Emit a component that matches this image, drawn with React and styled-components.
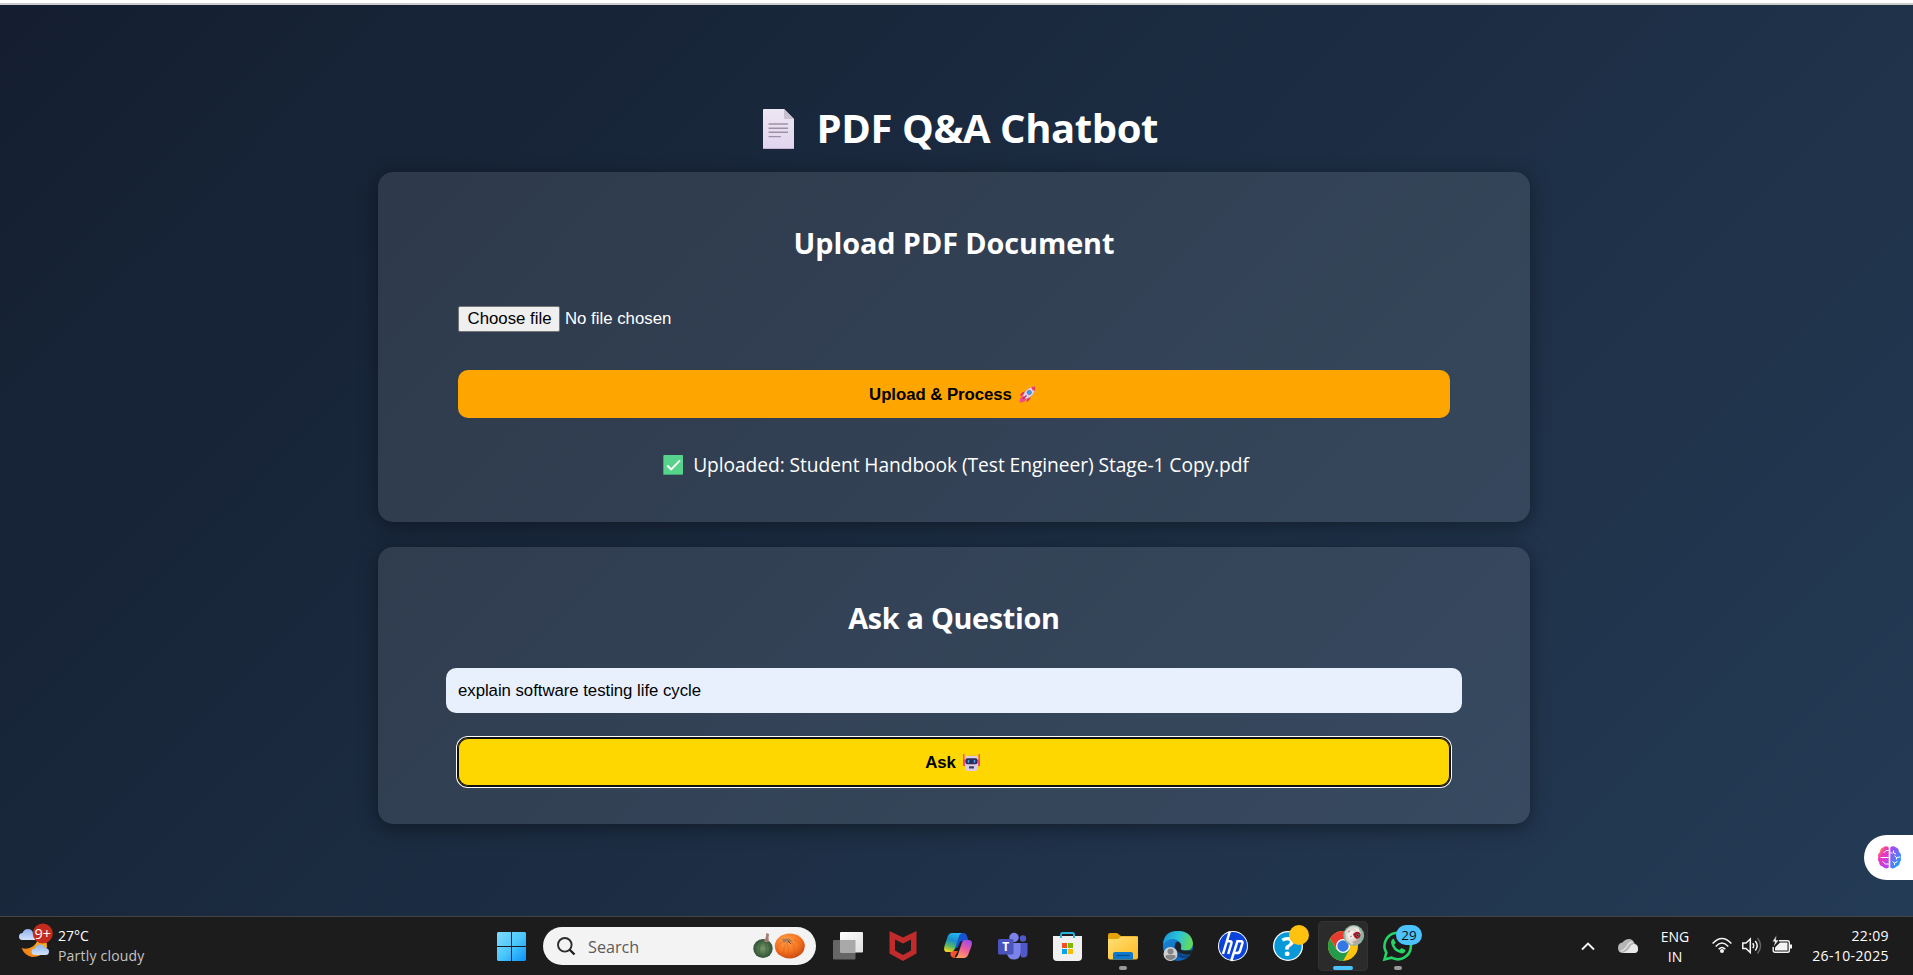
import React from 'react';
import styled, { createGlobalStyle } from 'styled-components';

const ui = '"Segoe UI", "Open Sans", "Noto Sans", sans-serif';
const form = 'Arial, "Liberation Sans", sans-serif';

const GlobalStyle = createGlobalStyle`
  *, *::before, *::after { box-sizing: border-box; }
  body { margin: 0; background: #141e30; overflow: hidden; }
  svg { display: block; flex: none; overflow: visible; }
`;

/* ---------- page ---------- */

const Screen = styled.div`
  position: relative;
  display: flex;
  flex-direction: column;
  width: 1913px;
  height: 975px;
  font-family: ${ui};
`;

const TopEdge = styled.div`
  height: 5px;
  background: #fff;
  border-bottom: 2px solid #cbcccb;
`;

const Page = styled.main`
  flex: 1;
  display: flex;
  flex-direction: column;
  align-items: center;
  padding: 96px 5px 0 0;
  color: #fff;
  background: linear-gradient(135deg, #141e30, #243b55);
`;

const Title = styled.h1`
  display: flex;
  align-items: center;
  gap: 22.5px;
  margin: 0 0 17px;
  padding-left: 13px;
  font-size: 40px;
  line-height: 54px;
  letter-spacing: -0.42px;
`;

const Card = styled.section`
  display: flex;
  flex-direction: column;
  width: 1152px;
  height: ${(p) => p.$height}px;
  margin-bottom: 25px;
  padding: 52px 80px 0;
  border-radius: 15px;
  background: rgba(255, 255, 255, 0.1);
  box-shadow: 0 4px 20px rgba(0, 0, 0, 0.4);
`;

const CardTitle = styled.h2`
  margin: 0 0 ${(p) => p.$gap}px;
  font-size: 28.8px;
  line-height: 38px;
  text-align: center;
  letter-spacing: ${(p) => p.$track}px;
`;

const FileRow = styled.div`
  display: flex;
  align-items: center;
  gap: 5px;
  height: 26px;
  margin-bottom: 38px;
  font: 16.8px ${form};
`;

const FileButton = styled.button`
  width: 102px;
  height: 26px;
  padding: 0 0 0 1px;
  border: 1px solid #767676;
  border-radius: 2px;
  background: #efefef;
  color: #000;
  font: inherit;
  line-height: 22px;
  white-space: nowrap;
`;

const ActionButton = styled.button`
  display: flex;
  align-items: center;
  justify-content: center;
  gap: 7px;
  height: 48px;
  padding: 2px 3px 0 0;
  border: 0;
  border-radius: 10px;
  background: ${(p) => p.$color};
  color: #000;
  font: bold 16.8px ${form};
  letter-spacing: -0.05px;
  box-shadow: ${(p) =>
    p.$focused ? 'inset 0 0 0 1px #101010, 0 0 0 1px #101010, 0 0 0 2px #fff' : 'none'};

  svg {
    margin-top: -2px;
  }
`;

const Status = styled.p`
  display: flex;
  align-items: center;
  justify-content: center;
  gap: 10px;
  margin: 34px 0 0;
  padding-left: 4px;
  font-size: 19.2px;
  line-height: 26px;
  letter-spacing: -0.06px;
`;

const Question = styled.input`
  width: 1016px;
  height: 45px;
  margin: 0 -12px 25px;
  padding: 0 12px;
  border: 0;
  border-radius: 10px;
  outline: 0;
  background: #e8f0fe;
  color: #000;
  font: 16.8px ${form};
  letter-spacing: -0.04px;
`;

const Assistant = styled.aside`
  position: absolute;
  right: 0;
  top: 835px;
  display: flex;
  align-items: center;
  width: 49px;
  height: 45px;
  padding-left: 14px;
  border-radius: 22.5px 0 0 22.5px;
  background: #fff;
`;

/* ---------- taskbar ---------- */

const Taskbar = styled.footer`
  display: flex;
  height: 59px;
  border-top: 1px solid #444;
  background: #1c1c1c;
  color: #fff;
  font-size: 14px;
`;

const Weather = styled.div`
  display: flex;
  gap: 5px;
  width: 484px;
  padding: 5px 0 0 19px;
`;

const Lines = styled.div`
  display: flex;
  flex-direction: column;
  padding-top: ${(p) => p.$top || 0}px;
  line-height: 20px;
  text-align: ${(p) => p.$align || 'left'};
  letter-spacing: ${(p) => p.$track || 0}px;
  white-space: nowrap;
`;

const Muted = styled.span`
  color: #c4c4c4;
  letter-spacing: 0.2px;
`;

const StartCell = styled.div`
  width: 59px;
  padding: 15px 0 0 13px;
`;

const SearchBox = styled.div`
  display: flex;
  align-items: center;
  width: 273px;
  height: 38px;
  margin: 10px 4.5px 0 0;
  padding: 0 11px 0 14px;
  border-radius: 19px;
  background: #f3f3f3;
  color: #5a5a5a;
  font-size: 16.2px;
`;

const SearchLabel = styled.span`
  flex: 1;
  padding: 1px 0 0 12px;
  line-height: 22px;
`;

const AppCell = styled.div`
  width: 55px;
  padding: 4px 2.5px 0;
`;

const AppTile = styled.div`
  width: 50px;
  height: 50px;
  border-radius: 5px;
  background: ${(p) => (p.$active ? '#2b2b2b' : 'transparent')};
  box-shadow: ${(p) => (p.$active ? 'inset 0 0 0 1px #333' : 'none')};
`;

const Tray = styled.div`
  display: flex;
  margin-left: auto;
  padding-right: 24px;
`;

const TrayIcon = styled.div`
  width: ${(p) => p.$width}px;
  padding-top: 18px;
`;

/* ---------- page drawings ---------- */

const DocumentIcon = () => (
  <svg width="31" height="40" viewBox="0 0 31 40">
    <defs>
      <linearGradient id="doc" x1="0" y1="0" x2="0" y2="1">
        <stop offset="0" stopColor="#ede6f3" />
        <stop offset="1" stopColor="#e1d5ee" />
      </linearGradient>
    </defs>
    <g transform="translate(0 1)">
      <path d="M1 0H21L31 10V39Q31 40 30 40H1Q0 40 0 39V1Q0 0 1 0Z" fill="url(#doc)" />
      <path d="M0 39H31Q31 40 30 40H1Q0 40 0 39Z" fill="#c6b5d3" />
      <path d="M21 0L31 10H22Q21 10 21 9Z" fill="#c9c1ce" />
      <path d="M5.500 15H25M5.500 19.200H25M5.500 23.200H25M5.500 27.600H18" stroke="#9d91a5" strokeWidth="1.400" />
    </g>
  </svg>
);

const Rocket = () => (
  <svg width="17" height="17" viewBox="0 0 17 17">
    <path d="M6 5.500Q2 6 1 10L4.500 9Z M11.500 10.500Q11 14.500 7.500 16L8 12Z" fill="#e7266b" />
    <path d="M3.500 9.500Q0.500 11.500 0.500 16.500Q5.500 16.500 7.500 13.500Z" fill="#f04a8b" />
    <path d="M4 9.500Q7 2 14.500 0.700Q16.500 0.300 16.300 2.500Q15 10 7.500 13Z" fill="#dcd3e9" stroke="#b5a5c3" strokeWidth=".5" />
    <path d="M12.300 1.400Q16.900 -.6 16.300 2.500Q16.100 4 15.500 5.100Q13 4.300 12.300 1.400Z" fill="#f13b57" />
    <circle cx="10.300" cy="6.500" r="2.100" fill="#39a0ed" stroke="#736a91" strokeWidth=".8" />
    <path d="M4 12.800L7.500 9.500" stroke="#bd2461" strokeWidth="1.200" />
  </svg>
);

const Robot = () => (
  <svg width="17" height="17" viewBox="0 0 17 17">
    <path d="M.8 0V11.500M16.200 0V11.500" stroke="#f84e78" strokeWidth="1.500" />
    <path d="M0 5.500H3V12H1Q0 12 0 11ZM14 5.500H17V11Q17 12 16 12H14Z" fill="#f0447b" />
    <path d="M5 1.200L7 2L8.500 1L10 2L12 1.200V3H5Z" fill="#f1a13d" />
    <path d="M2 5Q2 2 5 2H12Q15 2 15 5V12Q15 17 11.500 17H5.500Q2 17 2 12Z" fill="#d9cce9" />
    <rect x="2.400" y="4.300" width="12.200" height="6" rx="2" fill="#302b53" />
    <path d="M5.500 6V8.700M11.500 6V8.700" stroke="#3aaaf5" strokeWidth="1.500" />
    <rect x="6" y="12.300" width="5" height="2.200" rx=".5" fill="#453b5c" />
  </svg>
);

const CheckMark = () => (
  <svg width="20" height="20" viewBox="0 0 20 20">
    <rect width="20" height="20" rx="1.200" fill="#3da873" />
    <rect x="1" width="19" height="19" rx="1" fill="#57d38c" />
    <path d="M4.200 10.500L8.200 14.500L17 5.300" fill="none" stroke="#fff" strokeWidth="1.900" />
  </svg>
);

const Brain = () => (
  <svg width="23" height="23" viewBox="0 0 23 23">
    <defs>
      <linearGradient id="brainL" x1="0" y1="0" x2=".7" y2="1">
        <stop offset="0.080" stopColor="#ffad21" />
        <stop offset=".42" stopColor="#ee36b9" />
        <stop offset="1" stopColor="#b744f2" />
      </linearGradient>
      <linearGradient id="brainR" x1="0" y1="0" x2=".7" y2="1">
        <stop offset="0" stopColor="#b83bf0" />
        <stop offset="1" stopColor="#1aa4fa" />
      </linearGradient>
    </defs>
    <path d="M10.700 1.500Q8-.8 5 1.500Q2 2 2 6Q-.7 8 .2 11Q-.7 14 1.200 16.500Q1.500 20 4.500 20.500Q8 24 10.700 21.500Z" fill="url(#brainL)" />
    <path d="M12.300 1.500Q15-.8 18 1.500Q21 2 21 6Q23.700 8 22.800 11Q23.700 14 21.800 16.500Q21.500 20 18.500 20.500Q15 24 12.300 21.500Z" fill="url(#brainR)" />
    <path d="M10.700 4.500H8L5.500 7M2.500 11.500H10.700M4.500 15.500L7.500 18H10.700M12.300 7H14.500M15.500 4.500V7L18 8M22 11L18.500 11.500L16.500 9.800M18.500 11.500V13.500M14.500 15.500L16.500 17L19.500 15.500M16.500 17V19" fill="none" stroke="#fff" strokeWidth="1" />
  </svg>
);

/* ---------- taskbar drawings ---------- */

const WeatherIcon = () => (
  <svg width="34" height="36" viewBox="0 0 34 36">
    <defs>
      <linearGradient id="cloud" x1="0" y1="0" x2="0" y2="1">
        <stop offset="0" stopColor="#8cb2ef" />
        <stop offset="1" stopColor="#d5e3fb" />
      </linearGradient>
      <linearGradient id="moon" x1="1" y1="0" x2="0" y2="1">
        <stop offset="0" stopColor="#ffc21f" />
        <stop offset="1" stopColor="#ed7418" />
      </linearGradient>
    </defs>
    <path d="M19 15Q28 15 28 25Q24 35 13 35Q6 34 2.500 26Q9 28 14.500 24Q19 20 19 15Z" fill="url(#moon)" />
    <path d="M3.500 18Q0 18 0 14.500Q0 11 3.500 11Q5 7 9 7Q13 7 14 11Q18 11 18 18Z" fill="url(#cloud)" />
    <path d="M16 33Q12.500 33 12.500 29.500Q12.500 26.500 16 26.500Q17.500 22.500 21 22.500Q25 22.500 26 26Q30 26 30 29.500Q30 33 26.500 33Z" fill="url(#cloud)" />
    <circle cx="23.800" cy="11.500" r="10" fill="#c42b1c" />
    <text x="23.800" y="17" textAnchor="middle" fontSize="14.500" fill="#fff">9+</text>
  </svg>
);

const StartLogo = () => (
  <svg width="29" height="29" viewBox="0 0 29 29">
    <defs>
      <linearGradient id="win" x1="0" y1="0" x2="29" y2="29" gradientUnits="userSpaceOnUse">
        <stop offset="0" stopColor="#7fdcff" />
        <stop offset=".5" stopColor="#4cc8fb" />
        <stop offset="1" stopColor="#0a92fb" />
      </linearGradient>
    </defs>
    <path d="M1 0H14V14H0V1ZM15 0H28L29 1V14H15ZM0 15H14V29H1L0 28ZM15 15H29V28L28 29H15Z" fill="url(#win)" />
  </svg>
);

const Magnifier = () => (
  <svg width="19" height="19" viewBox="0 0 19 19">
    <circle cx="7.800" cy="7.800" r="6.800" fill="none" stroke="#2c2c2c" strokeWidth="1.900" />
    <path d="M12.700 12.700L17.500 17.500" stroke="#1c1c1c" strokeWidth="2.300" />
  </svg>
);

const Pumpkins = () => (
  <svg width="52" height="26" viewBox="0 0 52 26">
    <defs>
      <radialGradient id="gourd">
        <stop offset="0" stopColor="#779869" />
        <stop offset="1" stopColor="#315236" />
      </radialGradient>
      <radialGradient id="pumpkin" cx=".4" cy=".3" r=".7">
        <stop offset="0" stopColor="#ffa14e" />
        <stop offset=".6" stopColor="#f57420" />
        <stop offset="1" stopColor="#cb4b11" />
      </radialGradient>
    </defs>
    <ellipse cx="10" cy="15.500" rx="9.700" ry="9.500" fill="url(#gourd)" />
    <path d="M9 8Q4 15 8 24M11 8Q15 15 12 24M7 9Q-1 15 4 22M13 9Q20 15 15 22" fill="none" stroke="#3b6044" strokeWidth=".6" />
    <path d="M11 9Q13 5 13.500 0L16 1Q15 5 16 9Z" fill="#a27b74" />
    <ellipse cx="36.800" cy="13" rx="15" ry="12.500" fill="url(#pumpkin)" />
    <path d="M35 8Q29 14 31 24M38 8Q44 16 40 25M32 8Q20 12 26 22M41 7Q51 10 47 21M34 8Q36 18 36 25" fill="none" stroke="#e0631c" strokeWidth=".6" />
    <path d="M29 6L36 5.500L39 8L36 10L34 8L31 10Z" fill="#a97956" />
    <path d="M35 8L38 11" stroke="#694330" />
  </svg>
);

const Running = () => <rect x="21" y="45" width="8" height="4" rx="2" fill="#999" />;

const TaskView = () => (
  <svg width="50" height="50" viewBox="0 0 50 50">
    <defs>
      <linearGradient id="pane" x1="0" y1="0" x2="1" y2="1">
        <stop offset="0" stopColor="#fff" />
        <stop offset="1" stopColor="#ddd" />
      </linearGradient>
    </defs>
    <rect x="10" y="19" width="22.500" height="19.500" rx="1" fill="#666" />
    <rect x="17" y="11" width="23" height="20.500" rx="1" fill="url(#pane)" />
    <path d="M17 19H32.500V31.500H18Q17 31.500 17 30.500Z" fill="#a9a9a9" />
  </svg>
);

const McAfee = () => (
  <svg width="50" height="50" viewBox="0 0 50 50">
    <path d="M11.500 10L25 16.500L38.500 10V32.500L25 40L11.500 32.500ZM17 18.500V29.500L25 34L33 29.500V18.500L25 22.500Z" fill="#c22b2b" fillRule="evenodd" />
  </svg>
);

const Copilot = () => (
  <svg width="50" height="50" viewBox="0 0 50 50">
    <defs>
      <linearGradient id="copA" x1=".6" y1="0" x2=".3" y2="1">
        <stop offset="0" stopColor="#27b5f4" />
        <stop offset=".4" stopColor="#168fcb" />
        <stop offset=".7" stopColor="#55b768" />
        <stop offset="1" stopColor="#f2d51c" />
      </linearGradient>
      <linearGradient id="copB" x1=".7" y1="0" x2=".3" y2="1">
        <stop offset="0" stopColor="#a04be6" />
        <stop offset=".5" stopColor="#ee5d9b" />
        <stop offset="1" stopColor="#ffa15c" />
      </linearGradient>
    </defs>
    <path d="M28 12H30Q33 12 34 15L35.500 20H29Q27 20 26 23L25 26L19 30Z" fill="#1754d1" />
    <path d="M17.500 30H25L22 35Q21 37 24 37H22Q18.500 37 17.500 34Z" fill="#f4512c" />
    <path d="M19 12H29Q26.500 13 25.500 17L22 27Q21 31 17 31H14Q10 31 11.500 25L14.500 16Q16 12 19 12Z" fill="url(#copA)" />
    <path d="M32 19H36Q40 19 38.500 25L35.500 33Q34 37 31 37H22Q24.500 36 25.500 32L28.500 23Q29.500 19 32 19Z" fill="url(#copB)" />
  </svg>
);

const Teams = () => (
  <svg width="50" height="50" viewBox="0 0 50 50">
    <circle cx="35" cy="17.500" r="3.200" fill="#5059c9" />
    <path d="M30 22H39.500V32Q39.500 38 33 36Z" fill="#5059c9" />
    <circle cx="26" cy="16.500" r="4.700" fill="#7b83eb" />
    <path d="M20 22H32.500V31Q32.500 38.500 26 38.500Q20.500 38.500 19 33Z" fill="#7b83eb" />
    <rect x="10" y="18" width="15.500" height="15.500" rx="1.500" fill="#4b53bc" />
    <text x="17.700" y="30" textAnchor="middle" fontSize="12" fontWeight="bold" fill="#fff">T</text>
  </svg>
);

const Store = () => (
  <svg width="50" height="50" viewBox="0 0 50 50">
    <path d="M10 15H39V36Q39 40 35 40H14Q10 40 10 36Z" fill="#f0f0f0" />
    <path d="M18 17V13.500Q18 12 19.500 12H29.500Q31 12 31 13.500V17" fill="none" stroke="#29b3df" strokeWidth="1.900" />
    <path d="M19 22H24V27H19Z" fill="#f25022" />
    <path d="M25 22H30V27H25Z" fill="#7fba00" />
    <path d="M19 28H24V33H19Z" fill="#00a4ef" />
    <path d="M25 28H30V33H25Z" fill="#ffb900" />
  </svg>
);

const Explorer = () => (
  <svg width="50" height="50" viewBox="0 0 50 50">
    <defs>
      <linearGradient id="folder" x1="0" y1="0" x2="1" y2="1">
        <stop offset="0" stopColor="#ffdf77" />
        <stop offset="1" stopColor="#fdbb20" />
      </linearGradient>
    </defs>
    <path d="M10 14Q10 12 12 12H19L23 15H38Q40 15 40 17V24H10Z" fill="#e2a20b" />
    <path d="M10 18H20L23 15.500H40V36.500Q40 38.500 38 38.500H12Q10 38.500 10 36.500Z" fill="url(#folder)" />
    <path d="M15 38.500V33Q15 31 17 31H33Q35 31 35 33V38.500Z" fill="#0f7acb" />
    <path d="M18.500 34.500H31.500" stroke="#074f8f" strokeWidth="1.300" />
    <Running />
  </svg>
);

const Edge = () => (
  <svg width="50" height="50" viewBox="0 0 50 50">
    <defs>
      <linearGradient id="edgeA" x1="0" y1=".3" x2="1" y2=".5">
        <stop offset="0" stopColor="#1998df" />
        <stop offset=".5" stopColor="#2cc3d7" />
        <stop offset="1" stopColor="#68dc51" />
      </linearGradient>
      <linearGradient id="edgeB" x1="0" y1="0" x2="1" y2="1">
        <stop offset="0" stopColor="#198fe0" />
        <stop offset="1" stopColor="#0b56a4" />
      </linearGradient>
    </defs>
    <circle cx="25" cy="25" r="15" fill="url(#edgeB)" />
    <path d="M10 23Q11 10 25 10Q38 10 40 22Q40 30 31.500 29.500Q27 29 28 26Q29 22 24 19Q17 16 10 23Z" fill="url(#edgeA)" />
    <path d="M22 24Q18 34 29 37Q34 38 38 33Q33 36 28 33Q23 30 22 24Z" fill="#0c4385" />
    <path d="M22 25Q22 20 26 21Q29 23 28 27Q27 29.500 31 29.500H40L38 33Q33 35 27 32Q22 29 22 25Z" fill="#1c2229" />
    <circle cx="17.500" cy="33" r="7" fill="#d1d1d1" />
    <circle cx="17.500" cy="30.500" r="3" fill="#858585" />
    <path d="M12.500 36.500V35.500Q12.500 34 14 34H21Q22.500 34 22.500 35.500V36.500Q20 39 17.500 39Q15 39 12.500 36.500Z" fill="#858585" />
  </svg>
);

const Hp = () => (
  <svg width="50" height="50" viewBox="0 0 50 50">
    <circle cx="25" cy="25" r="15" fill="#fff" />
    <circle cx="25" cy="25" r="14" fill="#0a43dc" />
    <g fill="none" stroke="#fff" strokeWidth="2.500">
      <path d="M21.800 10.500L15 33M18.600 20.200H22Q24 20.200 23.400 22.400L20.200 33" />
      <path d="M29.800 19.200L23.200 40M29.300 20.200H33Q35 20.200 34.400 22.400L32 30Q31.400 32 29.200 32H26" />
    </g>
  </svg>
);

const Help = () => (
  <svg width="50" height="50" viewBox="0 0 50 50">
    <circle cx="25" cy="25" r="15" fill="#fff" />
    <circle cx="25" cy="25" r="13.700" fill="#0798d7" />
    <text x="25" y="35" textAnchor="middle" fontSize="27" fontWeight="bold" fill="#fff">?</text>
    <circle cx="36" cy="14" r="10" fill="#ffc20e" />
  </svg>
);

const Chrome = () => (
  <svg width="50" height="50" viewBox="0 0 50 50">
    <circle cx="25" cy="25" r="15" fill="#fdc50f" />
    <path d="M25 18H38L37.990 17.500A15 15 0 0 0 12.010 17.500L18.500 28Z" fill="#e63b2e" />
    <path d="M12.010 17.500A15 15 0 0 0 25 40L31.500 28.500L25 25L18.500 28.500Z" fill="#249b4b" />
    <circle cx="25" cy="25" r="7" fill="#fff" />
    <circle cx="25" cy="25" r="5.700" fill="#3478e8" />
    <circle cx="35.700" cy="14.500" r="10.400" fill="#8db5a4" />
    <path d="M27 11Q32 3 40 6L43 12L39 20L34 24L28 19Z" fill="#dfd8d0" />
    <path d="M29 13L34 9L38 12L36 17L31 19ZM36 7L41 8L40 12Z" fill="#f3ebe5" />
    <path d="M35 13Q39 9 42 12Q44 16 39 18Q36 17 35 13Z" fill="#a91928" />
    <path d="M38 14L41 13L40 16ZM30 11L32 10M32 16L34 15" fill="#570e18" stroke="#766c68" strokeWidth=".7" />
    <path d="M34 21L40 18L42 21L37 24Z" fill="#b6a7a5" />
    <rect x="15" y="45" width="20" height="4" rx="2" fill="#4cc2ff" />
  </svg>
);

const WhatsApp = () => (
  <svg width="50" height="50" viewBox="0 0 50 50">
    <path d="M11.500 38.500L13.300 31.700A13.200 13.200 0 1 1 18.500 36.700Z" fill="none" stroke="#25d366" strokeWidth="2.600" />
    <path d="M20.500 17.500Q18 18.500 18 21.500Q19 30 28.500 32.500Q32 32.500 32.500 29L28.500 27L26.500 29Q22.500 27.500 21.200 23.800L22.800 22Z" fill="#25d366" />
    <rect x="23" y="4" width="26" height="20" rx="10" fill="#4cc2ff" />
    <text x="36" y="19" textAnchor="middle" fontSize="13.500" fill="#111">29</text>
    <Running />
  </svg>
);

const Chevron = () => (
  <svg width="14" height="20" viewBox="0 0 14 20">
    <path d="M1 14.500L7 8.500L13 14.500" fill="none" stroke="#f5f5f5" strokeWidth="1.900" />
  </svg>
);

const OneDrive = () => (
  <svg width="20" height="20" viewBox="0 0 20 20">
    <path d="M5 18Q0 18 0 13Q0 8 4.500 7.500Q7 4 11 4Q15 4 16.500 8.500Q20 9.500 20 13.500Q20 18 16 18Z" fill="#b5b5b5" />
    <path d="M4.500 18Q10 16 12 12Q14.500 7.500 18 10Q20 11 20 14Q20 18 16 18Z" fill="#e8e8e8" />
    <path d="M2.500 16.500Q8 14 9.500 10.500Q11 7.500 14.500 7" fill="none" stroke="#e2e2e2" strokeWidth="1.300" />
  </svg>
);

const Wifi = () => (
  <svg width="20" height="20" viewBox="0 0 20 20">
    <g fill="none" stroke="#f5f5f5" strokeWidth="1.500">
      <path d="M.6 8.500Q10-1.300 19.400 8.500M3.700 11.500Q10 4.700 16.300 11.500M6.700 14.300Q10 10.800 13.300 14.300" />
    </g>
    <circle cx="10" cy="16" r="2" fill="#f5f5f5" />
  </svg>
);

const Speaker = () => (
  <svg width="20" height="20" viewBox="0 0 20 20">
    <path d="M.8 8H4L8.300 4V17.500L4 13.500H.8Z" fill="none" stroke="#f5f5f5" strokeWidth="1.500" />
    <path d="M10.800 8.200Q12.500 10.700 10.800 13.200M13.300 6Q17 10.700 13.300 15.500" fill="none" stroke="#f5f5f5" strokeWidth="1.500" />
    <path d="M15.500 3Q21.500 10.700 15.500 18.500" fill="none" stroke="#666" strokeWidth="1.400" />
  </svg>
);

const Battery = () => (
  <svg width="20" height="20" viewBox="0 0 20 20">
    <path d="M7 5.700H15.500Q17.300 5.700 17.300 7.500V15.500Q17.300 17.300 15.500 17.300H3Q1.200 17.300 1.200 15.500V12" fill="none" stroke="#f5f5f5" strokeWidth="1.400" />
    <path d="M18 9.500H20V13.500H18Z" fill="#f5f5f5" />
    <path d="M8 7.500H15.500V15.500H3V12.500Z" fill="#f5f5f5" />
    <path d="M4.500 0L.3 6.800H2.800L1.500 12L7 5H4Z" fill="#f5f5f5" stroke="#1c1c1c" strokeWidth=".6" />
  </svg>
);

const apps = [TaskView, McAfee, Copilot, Teams, Store, Explorer, Edge, Hp, Help, Chrome, WhatsApp];

export default function App() {
  return (
    <Screen>
      <GlobalStyle />
      <TopEdge />
      <Page>
        <Title>
          <DocumentIcon />
          PDF Q&amp;A Chatbot
        </Title>
        <Card $height={350}>
          <CardTitle $gap={44} $track={-0.06}>
            Upload PDF Document
          </CardTitle>
          <FileRow>
            <FileButton type="button">Choose file</FileButton>
            <span>No file chosen</span>
          </FileRow>
          <ActionButton $color="#ffa500">
            Upload &amp; Process
            <Rocket />
          </ActionButton>
          <Status>
            <CheckMark />
            Uploaded: Student Handbook (Test Engineer) Stage-1 Copy.pdf
          </Status>
        </Card>
        <Card $height={277}>
          <CardTitle $gap={31} $track={-0.3}>
            Ask a Question
          </CardTitle>
          <Question defaultValue="explain software testing life cycle" />
          <ActionButton $color="#ffd700" $focused>
            Ask
            <Robot />
          </ActionButton>
        </Card>
      </Page>
      <Assistant>
        <Brain />
      </Assistant>
      <Taskbar>
        <Weather>
          <WeatherIcon />
          <Lines $top={4}>
            <span>27°C</span>
            <Muted>Partly cloudy</Muted>
          </Lines>
        </Weather>
        <StartCell>
          <StartLogo />
        </StartCell>
        <SearchBox>
          <Magnifier />
          <SearchLabel>Search</SearchLabel>
          <Pumpkins />
        </SearchBox>
        {apps.map((Icon, i) => (
          <AppCell key={i}>
            <AppTile $active={Icon === Chrome}>
              <Icon />
            </AppTile>
          </AppCell>
        ))}
        <Tray>
          <TrayIcon $width={37}>
            <Chevron />
          </TrayIcon>
          <TrayIcon $width={43}>
            <OneDrive />
          </TrayIcon>
          <Lines $top={10} $align="center">
            <span>ENG</span>
            <span>IN</span>
          </Lines>
          <TrayIcon $width={23} />
          <TrayIcon $width={30}>
            <Wifi />
          </TrayIcon>
          <TrayIcon $width={30}>
            <Speaker />
          </TrayIcon>
          <TrayIcon $width={40}>
            <Battery />
          </TrayIcon>
          <Lines $top={9} $align="right" $track={0.37}>
            <span>22:09</span>
            <span>26-10-2025</span>
          </Lines>
        </Tray>
      </Taskbar>
    </Screen>
  );
}
